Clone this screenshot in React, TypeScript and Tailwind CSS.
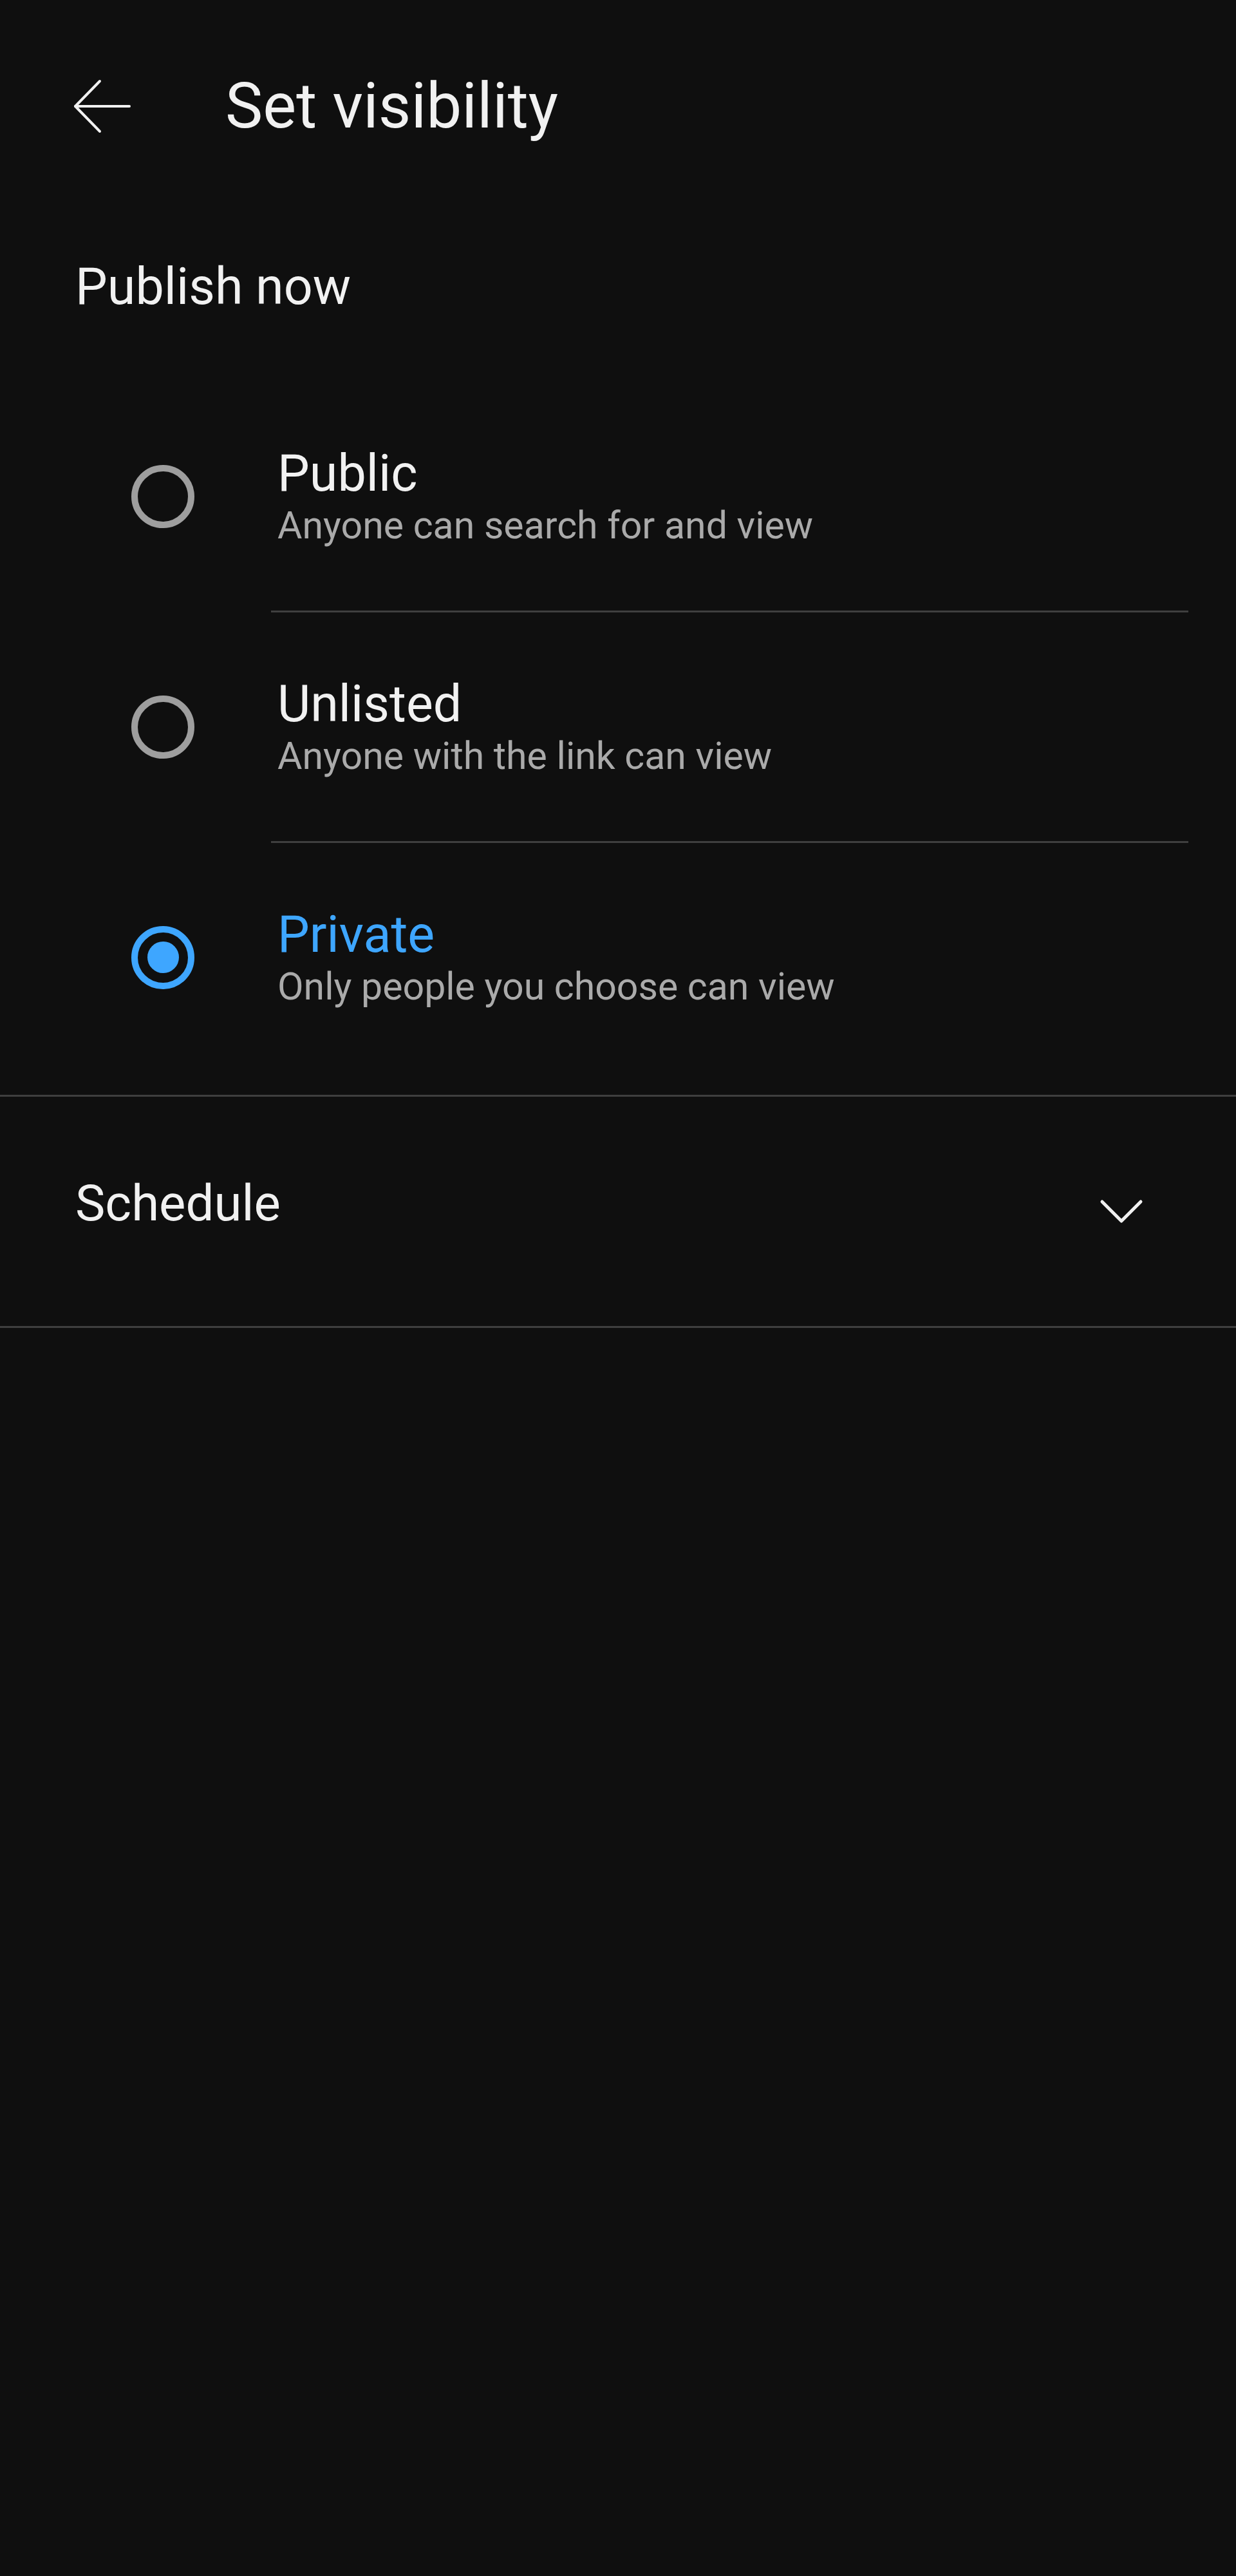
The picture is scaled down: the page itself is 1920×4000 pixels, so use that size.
import React from "react";

const font = { fontFamily: "Roboto, 'Noto Sans', sans-serif" };

type Opt = { title: string; sub: string; selected?: boolean };

const options: Opt[] = [
  { title: "Public", sub: "Anyone can search for and view" },
  { title: "Unlisted", sub: "Anyone with the link can view" },
  { title: "Private", sub: "Only people you choose can view", selected: true },
];

function Radio({ selected }: { selected?: boolean }) {
  if (selected) {
    return (
      <div className="w-[98px] h-[98px] rounded-full border-[10px] border-[#3ea6ff] flex items-center justify-center">
        <div className="w-[49px] h-[49px] rounded-full bg-[#3ea6ff]" />
      </div>
    );
  }
  return <div className="w-[98px] h-[98px] rounded-full border-[10px] border-[#9e9e9e]" />;
}

export default function App() {
  return (
    <div className="min-h-screen w-full bg-[#0f0f0f] text-[#f1f1f1]" style={font}>
      {/* Header */}
      <div className="flex items-center h-[330px] pl-[114px]">
        <svg width="90" height="90" viewBox="0 0 90 90" fill="none" stroke="#f1f1f1" strokeWidth="4" strokeLinecap="round" strokeLinejoin="round">
          <line x1="3" y1="45" x2="87" y2="45" />
          <polyline points="41,6 3,45 41,84" />
        </svg>
        <div className="ml-[146px] text-[98px] leading-[110px]">Set visibility</div>
      </div>

      {/* Publish now */}
      <div className="flex items-center h-[230px] pl-[117px]">
        <div className="text-[79px] leading-[92px]">Publish now</div>
      </div>

      {/* Options */}
      <div className="pt-[33px] pb-[36px]">
        {options.map((o, i) => (
          <div key={o.title}>
            <div className="flex items-center h-[355px]">
              <div className="w-[431px] pl-[204px] flex items-center">
                <Radio selected={o.selected} />
              </div>
              <div className="flex flex-col">
                <div className={`text-[79px] leading-[90px] ${o.selected ? "text-[#3ea6ff]" : "text-[#f1f1f1]"}`}>
                  {o.title}
                </div>
                <div className="text-[59px] leading-[72px] text-[#aaaaaa]">{o.sub}</div>
              </div>
            </div>
            {i < options.length - 1 && <div className="h-[3px] bg-[#3f3f3f] ml-[421px] mr-[74px]" />}
          </div>
        ))}
      </div>

      <div className="h-[3px] bg-[#3f3f3f]" />

      {/* Schedule */}
      <div className="flex items-center justify-between h-[356px] pl-[117px] pr-[143px]">
        <div className="text-[78px] leading-[92px] mb-[24px]">Schedule</div>
        <svg width="70" height="40" viewBox="0 0 70 40" fill="none" stroke="#f1f1f1" strokeWidth="5" strokeLinecap="round" strokeLinejoin="round">
          <polyline points="5,5 35,35 65,5" />
        </svg>
      </div>

      <div className="h-[3px] bg-[#3f3f3f]" />
    </div>
  );
}
